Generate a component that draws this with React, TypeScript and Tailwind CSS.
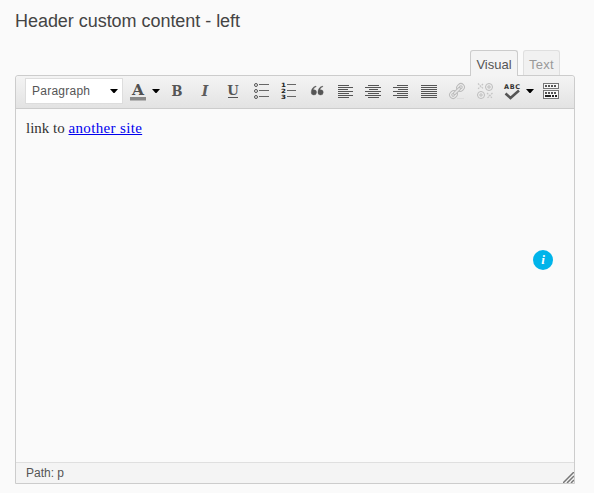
import type { ReactNode } from "react";

const slab = "'DejaVu Serif', serif";

function Button({ label, className = "w-7", children }: { label: string; className?: string; children: ReactNode }) {
  return (
    <button aria-label={label} className={`flex h-7 shrink-0 items-center justify-center ${className}`}>
      {children}
    </button>
  );
}

function Icon({ children }: { children: ReactNode }) {
  return (
    <svg width="28" height="28" viewBox="0 0 28 28" className="block shrink-0" fill="none">
      {children}
    </svg>
  );
}

function Caret() {
  return (
    <svg width="8" height="4" viewBox="0 0 8 4" className="block shrink-0">
      <path d="M0 0h8L4.5 4h-1z" fill="#000" />
    </svg>
  );
}

function Align({ rows }: { rows: [number, number][] }) {
  return (
    <Icon>
      {rows.map(([x, w], i) => (
        <rect key={i} x={x} y={8 + i * 2} width={w} height="1" fill="#555" />
      ))}
    </Icon>
  );
}

function Toolbar() {
  return (
    <div className="flex h-[33px] shrink-0 items-start rounded-t-[3px] border-b border-[#ccc] bg-linear-to-b from-[#f4f4f4] to-[#e3e3e3] pl-[9px] pt-px">
      <button className="mt-px flex h-[26px] w-[98px] shrink-0 items-center justify-between border border-[#ddd] bg-white pl-1.5 pr-1 text-[12px] tracking-[0.25px] text-[#555]">
        <span>Paragraph</span>
        <Caret />
      </button>
      <Button label="Text color" className="ml-px w-7">
        <Icon>
          <text x="14" y="18" textAnchor="middle" fontFamily={slab} fontWeight="700" fontSize="14.5" textLength="12" lengthAdjust="spacingAndGlyphs" fill="#505050">A</text>
          <rect x="6" y="20" width="16" height="3.500" fill="#888" />
        </Icon>
      </Button>
      <Button label="Color options" className="w-2"><Caret /></Button>
      <Button label="Bold" className="ml-[3px] w-7">
        <Icon><text x="14" y="19" textAnchor="middle" fontFamily={slab} fontWeight="700" fontSize="14" textLength="11" lengthAdjust="spacingAndGlyphs" fill="#555">B</text></Icon>
      </Button>
      <Button label="Italic">
        <Icon><text x="14" y="19" textAnchor="middle" fontFamily={slab} fontWeight="700" fontStyle="italic" fontSize="14" textLength="6.500" lengthAdjust="spacingAndGlyphs" fill="#5c5c5c">I</text></Icon>
      </Button>
      <Button label="Underline">
        <Icon>
          <text x="14" y="18" textAnchor="middle" fontFamily={slab} fontWeight="700" fontSize="13.5" textLength="11.5" lengthAdjust="spacingAndGlyphs" fill="#555">U</text>
          <rect x="9" y="20" width="10" height="1" fill="#555" />
        </Icon>
      </Button>
      <Button label="Bulleted list">
        <Icon>
          {[8, 14, 20].map((y) => (
            <g key={y}>
              <circle cx="9" cy={y} r="1.5" stroke="#555" />
              <rect x="12" y={y - 1} width="10" height="1" fill="#666" />
            </g>
          ))}
        </Icon>
      </Button>
      <Button label="Numbered list">
        <Icon>
          {[8, 14, 20].map((y, i) => (
            <g key={y}>
              <text x="6" y={y + 2} fontFamily="'DejaVu Sans', sans-serif" fontWeight="700" fontSize="5.8" textLength="5" lengthAdjust="spacingAndGlyphs" fill="#222">{i + 1}</text>
              <rect x="12" y={y - 1} width="9" height="1" fill="#666" />
            </g>
          ))}
        </Icon>
      </Button>
      <Button label="Blockquote">
        <Icon>
          {[0, 6.7].map((dx) => (
            <path key={dx} transform={`translate(${dx} 0)`} d="M13 9C10 9.700 8.200 12 8.200 15.300a2.700 2.700 0 1 0 2.900-2.600c-.3 0-.6 0-.8.1.3-1.300 1.200-2.300 2.900-3z" fill="#555" stroke="#555" strokeWidth=".3" />
          ))}
        </Icon>
      </Button>
      <Button label="Align left"><Align rows={[[7, 11], [7, 15], [7, 10], [7, 15], [7, 11], [7, 15], [7, 11]]} /></Button>
      <Button label="Align center"><Align rows={[[9, 11], [6, 16], [10, 9], [6, 16], [9, 11], [6, 16], [9, 11]]} /></Button>
      <Button label="Align right"><Align rows={[[10, 11], [6, 15], [11, 10], [6, 15], [10, 11], [6, 15], [10, 11]]} /></Button>
      <Button label="Justify"><Align rows={[[6, 16], [6, 16], [6, 16], [6, 16], [6, 16], [6, 16], [6, 16]]} /></Button>
      <Button label="Insert link">
        <Icon>
          <g transform="rotate(-45 14 14)" stroke="#bcbcbc">
            <rect x="5" y="10.500" width="8" height="7" rx="3.500" fill="#ececec" />
            <rect x="15" y="10.500" width="8" height="7" rx="3.500" fill="#ececec" />
            <circle cx="8.500" cy="14" r="1.300" />
            <circle cx="19.500" cy="14" r="1.300" />
            <rect x="9.500" y="12.700" width="9" height="2.600" rx="1.300" fill="#e8e8e8" />
          </g>
          <path d="M14 21.500h7" stroke="#ddd" />
        </Icon>
      </Button>
      <Button label="Remove link">
        <Icon>
          <g stroke="#bcbcbc" fill="#ececec">
            <circle cx="10" cy="18" r="3.500" />
            <circle cx="10" cy="18" r="1.200" />
            <circle cx="18" cy="10" r="3.500" />
            <circle cx="18" cy="10" r="1.200" />
          </g>
          <path d="M7 6.500l5 5M12 7l-5 5M16 16l5.500 5.500M21.500 16l-5.500 5.500" stroke="#c4c4c4" strokeWidth="1.200" strokeDasharray="1.800 .8" />
        </Icon>
      </Button>
      <Button label="Check spelling" className="w-[26px]">
        <Icon>
          <text x="6" y="12" fontFamily="'DejaVu Sans', sans-serif" fontWeight="700" fontSize="6.500" textLength="16" fill="#333">ABC</text>
          <path d="M7.500 16.500l5 4.500 8.500-7.500" stroke="#555" strokeWidth="2.500" />
        </Icon>
      </Button>
      <Button label="Spelling options" className="w-[9px]"><Caret /></Button>
      <Button label="Show more tools" className="ml-[3px] w-7">
        <Icon>
          <rect x="6.500" y="6.500" width="15" height="5" fill="#f8f8f8" stroke="#777" />
          <path d="M8 9h12" stroke="#555" strokeWidth="2" strokeDasharray="2 1" />
          <rect x="6.500" y="13.500" width="15" height="8" fill="#f8f8f8" stroke="#777" />
          <path d="M8 16h12" stroke="#555" strokeWidth="2" strokeDasharray="2 1" />
          <path d="M8 19h6m1 0h2m1 0h2" stroke="#222" strokeWidth="2" />
        </Icon>
      </Button>
    </div>
  );
}

export default function App() {
  return (
    <main className="flex h-[493px] w-[594px] flex-col bg-[#fafafa] px-[15px] pt-[9px] font-['Liberation_Sans',Arial,sans-serif]">
      <h1 className="h-[41px] text-[18px] leading-6 tracking-[-0.04px] text-[#444]">Header custom content - left</h1>
      <div className="relative z-10 -mb-px flex h-[26px] shrink-0 justify-end gap-[5px] pr-[19px] text-[13px] leading-[27px]">
        <button className="h-[26px] w-12 rounded-t-[3px] border border-b-0 border-[#ccc] bg-[#f4f4f4] text-[#555]">Visual</button>
        <button className="h-[25px] w-[37px] rounded-t-[3px] border border-b-0 border-[#dfdfdf] bg-[#f1f1f1] tracking-[0.3px] text-[#999]">Text</button>
      </div>
      <section className="flex h-[409px] w-[560px] shrink-0 flex-col rounded-t-[3px] border border-[#ccc]">
        <Toolbar />
        <div className="relative grow px-2.5 pt-[9px] font-['Liberation_Serif','Times_New_Roman',serif] text-[15px] leading-5 text-[#333]">
          link to <a href="#site" className="tracking-[0.34px] text-[#00e] underline">another site</a>
          <span className="absolute top-[141px] right-[21px] flex size-5 items-center justify-center rounded-full bg-[#00b4ea] text-[13px] font-bold italic text-white">i</span>
        </div>
        <footer className="flex h-[21px] shrink-0 items-center justify-between border-t border-[#dfdfdf] bg-[#f4f4f4] pl-2.5 text-[12px] text-[#555]">
          <span>Path: p</span>
          <svg width="11" height="11" viewBox="0 0 11 11" className="self-end">
            <path d="M0 11L11 0M4 11l7-7M8 11l3-3" stroke="#777" strokeWidth="1.500" />
          </svg>
        </footer>
      </section>
    </main>
  );
}
